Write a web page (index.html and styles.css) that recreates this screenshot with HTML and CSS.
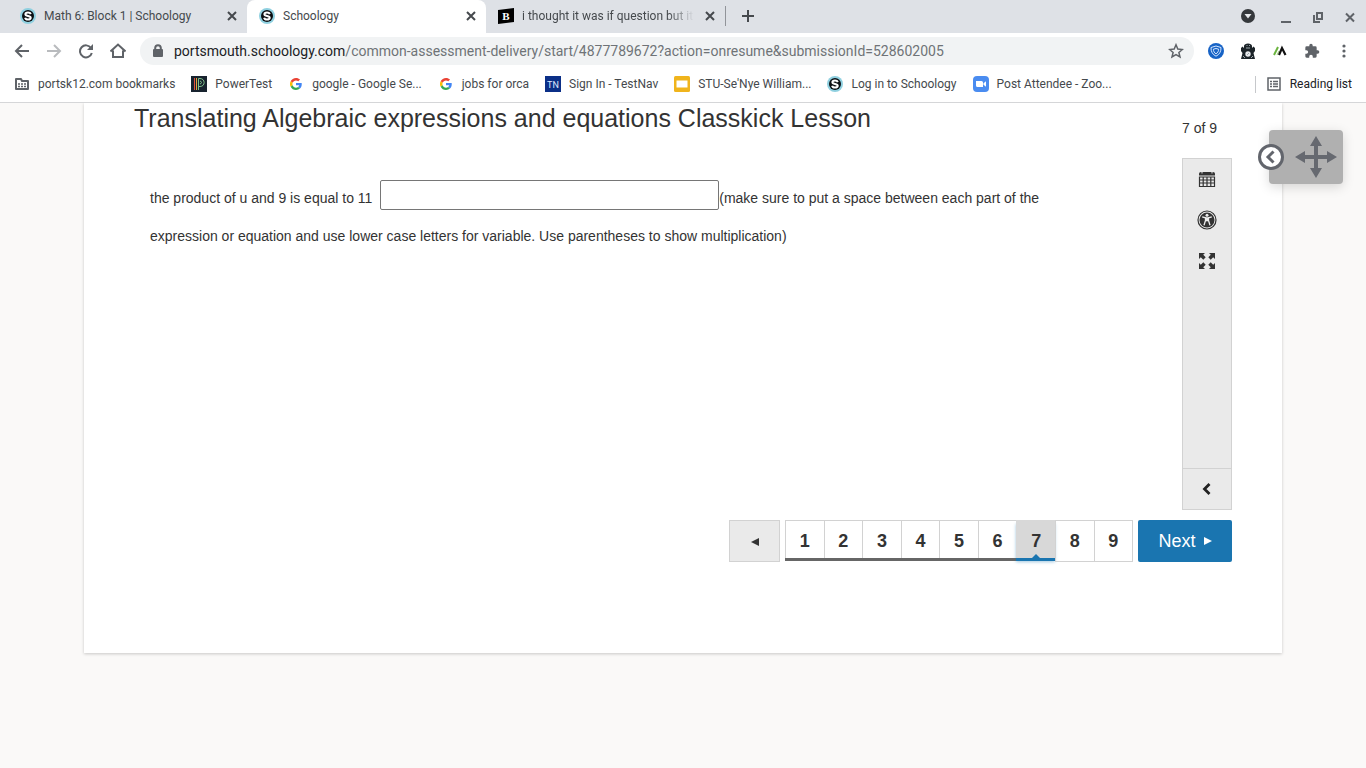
FILE: index.html
```html
<!DOCTYPE html>
<html lang="en">
<head>
    <meta charset="utf-8">
    <meta name="viewport" content="width=device-width, initial-scale=1.0">
    <title>Schoology</title>
    <link rel="stylesheet" href="styles.css">
</head>
<body>
    <svg class="sprite" aria-hidden="true">
        <symbol id="schoology" viewBox="0 0 16 16">
            <circle cx="8" cy="8" r="8" fill="#8fd0e0"/>
            <circle cx="8" cy="8" r="6" fill="#0b0f12"/>
            <path d="M10.8 6.1C10.4 4.9 9.300 4.500 8 4.500c-1.600 0-2.600.700-2.600 1.700 0 2.300 5.300 1.200 5.300 3.500 0 1.100-1.100 1.800-2.700 1.800-1.500 0-2.600-.600-2.900-1.800" fill="none" stroke="#fff" stroke-width="2"/>
        </symbol>
        <symbol id="google" viewBox="0 0 48 48">
            <path fill="#ea4335" d="M24 9.500c3.540 0 6.710 1.220 9.210 3.600l6.850-6.850C35.900 2.380 30.470 0 24 0 14.620 0 6.510 5.380 2.560 13.220l7.980 6.190C12.430 13.720 17.740 9.500 24 9.500z"/>
            <path fill="#4285f4" d="M46.980 24.550c0-1.570-.150-3.090-.380-4.550H24v9.020h12.940c-.580 2.960-2.260 5.480-4.780 7.180l7.730 6c4.510-4.180 7.090-10.360 7.090-17.650z"/>
            <path fill="#fbbc05" d="M10.530 28.590a14.500 14.500 0 0 1 0-9.180l-7.980-6.190a24 24 0 0 0 0 21.560z"/>
            <path fill="#34a853" d="M24 48c6.480 0 11.930-2.130 15.890-5.810l-7.730-6C30.010 37.640 27.240 38.500 24 38.500c-6.260 0-11.570-4.220-13.470-9.910l-7.980 6.190C6.510 42.620 14.620 48 24 48z"/>
        </symbol>
        <symbol id="cross" viewBox="0 0 16 16">
            <path d="M4 4l8 8M12 4l-8 8" fill="none" stroke="currentColor" stroke-width="2"/>
        </symbol>
    </svg>

    <header class="browser">
        <div class="tabs">
            <div class="tab">
                <svg class="icon"><use href="#schoology"/></svg>
                <span class="tab-title">Math 6: Block 1 | Schoology</span>
                <button class="tab-close" aria-label="Close tab"><svg class="icon"><use href="#cross"/></svg></button>
            </div>
            <div class="tab active">
                <svg class="icon"><use href="#schoology"/></svg>
                <span class="tab-title">Schoology</span>
                <button class="tab-close" aria-label="Close tab"><svg class="icon"><use href="#cross"/></svg></button>
            </div>
            <div class="tab">
                <svg class="icon" viewBox="0 0 16 16"><path d="M0 2l16-2v14L0 16z" fill="#000"/><text x="8" y="12" class="brainly">B</text></svg>
                <span class="tab-title faded">i thought it was if question but it</span>
                <button class="tab-close" aria-label="Close tab"><svg class="icon"><use href="#cross"/></svg></button>
            </div>
            <button class="new-tab" aria-label="New tab">
                <svg class="icon" viewBox="0 0 16 16"><path d="M8 2v12M2 8h12" stroke="currentColor" stroke-width="2"/></svg>
            </button>
            <div class="window-buttons">
                <button class="tab-search" aria-label="Search tabs"><svg class="icon" viewBox="0 0 16 16"><circle cx="8" cy="8" r="7" fill="#35383c"/><path d="M4.500 6h7L8 10.500z" fill="#e8eaed"/></svg></button>
                <button aria-label="Minimize"><svg class="icon" viewBox="0 0 16 16"><path d="M3 13h10" stroke="currentColor" stroke-width="2"/></svg></button>
                <button aria-label="Restore"><svg class="icon" viewBox="0 0 16 16"><path d="M7 4h5v6H7zM4 6v7h6" fill="none" stroke="currentColor" stroke-width="2"/></svg></button>
                <button aria-label="Close"><svg class="icon" viewBox="0 0 16 16"><path d="M4 4.500l8 8M12 4.500l-8 8" stroke="currentColor" stroke-width="2"/></svg></button>
            </div>
        </div>

        <div class="toolbar">
            <button aria-label="Back"><svg class="icon" viewBox="0 0 16 16"><path d="M15 8H2M8 2L2 8l6 6" fill="none" stroke="currentColor" stroke-width="2"/></svg></button>
            <button aria-label="Forward" disabled><svg class="icon" viewBox="0 0 16 16"><path d="M1 8h13M8 2l6 6-6 6" fill="none" stroke="currentColor" stroke-width="2"/></svg></button>
            <button aria-label="Reload"><svg class="icon" viewBox="0 0 16 16"><path d="M13 5A6 6 0 1 0 13.800 10" fill="none" stroke="currentColor" stroke-width="2"/><path d="M15 1v6H9z" fill="currentColor"/></svg></button>
            <button aria-label="Home"><svg class="icon" viewBox="0 0 16 16"><path d="M.500 8.500L8 1.500l7.500 7M3 7.500V14h10V7.500" fill="none" stroke="currentColor" stroke-width="2"/></svg></button>
            <div class="address">
                <svg class="lock" viewBox="0 0 12 14"><path d="M3.200 6V4a2.800 2.800 0 0 1 5.600 0v2" fill="none" stroke="#5f6368" stroke-width="2"/><rect x="1" y="5" width="10" height="8" rx="1" fill="#5f6368"/></svg>
                <span class="url"><b>portsmouth.schoology.com</b>/common-assessment-delivery/start/4877789672?action=onresume&amp;submissionId=528602005</span>
                <svg class="icon" viewBox="0 0 16 16"><path d="M8 1.800l1.800 4.300 4.600.400-3.500 3 1.100 4.500-4-2.400L4 14l1.100-4.500-3.500-3 4.600-.400z" fill="none" stroke="#5f6368" stroke-width="1.500"/></svg>
            </div>
            <button aria-label="Security extension"><svg class="icon" viewBox="0 0 16 16"><circle cx="8" cy="8" r="8" fill="#1763c6"/><path d="M8 3l5 1.500c.200 4-1.500 7-5 8.700C4.500 11.500 2.800 8.500 3 4.500z" fill="none" stroke="#d7e8ff"/><path d="M8 5.500l2.600.700c0 2-.900 3.600-2.600 4.600-1.700-1-2.600-2.600-2.600-4.600z" fill="none" stroke="#d7e8ff"/></svg></button>
            <button aria-label="Bear extension"><svg class="icon" viewBox="0 0 16 16"><path d="M4 3C4-.500 12-.500 12 3v2l1.500-1.500L15 5v3l-1.500 2 1.500 6H1l1.500-6L1 8V5l1.500-1.500L4 5z" fill="#1c2429"/><circle cx="8" cy="11" r="2.700" fill="#e8eaed"/><path d="M6.500 2.500h1M9 2.500h1M6 5h4M3 13l2 2M13 13l-2 2M7 12l2-2" stroke="#9aa5ab"/></svg></button>
            <button aria-label="Reader extension"><svg class="icon" viewBox="0 0 16 16"><path d="M2 12l4-8" stroke="#6ab43e" stroke-width="2"/><path d="M5 12l2-4" stroke="#9acb72"/><path d="M7 12l3-7 3.500 7" fill="none" stroke="#111" stroke-width="2.200"/></svg></button>
            <button aria-label="Extensions"><svg class="icon" viewBox="0 0 24 24"><path d="M20.500 11H19V7a2 2 0 0 0-2-2h-4V3.500a2.500 2.500 0 0 0-5 0V5H4a2 2 0 0 0-2 2v3.800h1.500a2.700 2.700 0 0 1 0 5.400H2V20a2 2 0 0 0 2 2h3.800v-1.500a2.700 2.700 0 0 1 5.400 0V22H17a2 2 0 0 0 2-2v-4h1.500a2.500 2.500 0 0 0 0-5z" fill="currentColor"/></svg></button>
            <button aria-label="Menu"><svg class="icon" viewBox="0 0 16 16"><g fill="currentColor"><circle cx="8" cy="3" r="1.600"/><circle cx="8" cy="8" r="1.600"/><circle cx="8" cy="13" r="1.600"/></g></svg></button>
        </div>

        <nav class="bookmarks">
            <a href="#"><svg class="icon" viewBox="0 0 16 16"><path d="M2 3h5l1 2h6v8H2z" fill="none" stroke="#5f6368" stroke-width="2" stroke-linejoin="round"/><path d="M4 8h2M7 8h2M10 8h2M4 10.500h2M7 10.500h2M10 10.500h2" stroke="#5f6368" stroke-width="1.500"/></svg>portsk12.com bookmarks</a>
            <a href="#"><svg class="icon" viewBox="0 0 16 16"><path d="M0 0h16v16H0z" fill="#18232f"/><path d="M3.500 2v12" stroke="#e2513c"/><path d="M5.500 2v12" stroke="#e9a13b"/><path d="M7.500 14V2.500H9c5.500 0 5.500 8 0 8H7.500M9 5c2 .500 2 2.500 0 3" fill="none" stroke="#7fc08a"/></svg>PowerTest</a>
            <a href="#"><svg class="icon g"><use href="#google"/></svg>google - Google Se...</a>
            <a href="#"><svg class="icon g"><use href="#google"/></svg>jobs for orca</a>
            <a href="#"><svg class="icon" viewBox="0 0 16 16"><path d="M0 0h16v16H0z" fill="#0b2f87"/><text x="8" y="12" class="testnav">TN</text></svg>Sign In - TestNav</a>
            <a href="#"><svg class="icon" viewBox="0 0 16 16"><rect y="0" width="16" height="16" rx="1.500" fill="#f0b41c"/><path d="M2.500 4.500h11v7h-11z" fill="#fff"/></svg>STU-Se'Nye William...</a>
            <a href="#"><svg class="icon"><use href="#schoology"/></svg>Log in to Schoology</a>
            <a href="#"><svg class="icon" viewBox="0 0 16 16"><rect width="16" height="16" rx="4" fill="#4a8cf0"/><path d="M3 5h5.500a1.500 1.500 0 0 1 1.500 1.500V11H4.500A1.500 1.500 0 0 1 3 9.500zM10.500 7.200L13 5.300v5.400l-2.500-1.900z" fill="#fff"/></svg>Post Attendee - Zoo...</a>
            <button class="reading-list"><svg class="icon" viewBox="0 0 16 16"><path d="M2 2h12v12H2z" fill="none" stroke="#5f6368" stroke-width="1.500"/><path d="M4 5.500h2M7 5.500h5M4 8h2M7 8h5M4 10.500h2M7 10.500h5" stroke="#5f6368" stroke-width="1.400"/></svg>Reading list</button>
        </nav>
    </header>

    <main class="page">
        <section class="assessment">
            <div class="heading">
                <h1>Translating Algebraic expressions and equations Classkick Lesson</h1>
                <span class="progress">7 of 9</span>
            </div>
            <div class="workspace">
                <p class="question"><label for="answer">the product of u and 9 is equal to 11</label> <input type="text" id="answer" class="answer">(make sure to put a space between each part of the expression or equation and use lower case letters for variable. Use parentheses to show multiplication)</p>
                <aside class="tools">
                    <button aria-label="Calendar"><svg viewBox="0 0 20 20"><path d="M2 6.500V4.500Q2 3 4 3h12q2 0 2 1.500v2z" fill="#333"/><path d="M5 1.500v3M15 1.500v3M8 2.500h4" stroke="#eaeaea" stroke-width="1"/><path d="M2.500 8h15v9.500h-15zM2.500 11h15M2.500 14h15M6.200 8v9.500M10 8v9.500M13.800 8v9.500" fill="none" stroke="#333" stroke-width="1.200"/></svg></button>
                    <button aria-label="Accessibility"><svg viewBox="0 0 20 20"><circle cx="10" cy="10" r="9" fill="none" stroke="#333" stroke-width="1.200"/><circle cx="10" cy="10" r="7.500" fill="#333"/><circle cx="10" cy="5.300" r="1.500" fill="#eee"/><path d="M5.200 6.800l3.300 1v2.700L7 15.200M14.800 6.800l-3.300 1v2.700l1.500 4.700" fill="none" stroke="#eee" stroke-width="1.300"/><path d="M8.300 7.300h3.400v4H8.300z" fill="#eee"/></svg></button>
                    <button aria-label="Full screen"><svg viewBox="0 0 20 20"><path d="M2 2h6L6.200 3.800l2.500 2.500-2.400 2.400-2.500-2.500L2 8zM18 2v6l-1.800-1.800-2.500 2.500-2.400-2.400 2.500-2.500L12 2zM2 18v-6l1.800 1.800 2.500-2.500 2.400 2.400-2.500 2.500L8 18zM18 18h-6l1.800-1.800-2.500-2.500 2.400-2.400 2.500 2.500L18 12z" fill="#333"/></svg></button>
                    <button class="collapse" aria-label="Collapse tools"><svg viewBox="0 0 20 20"><path d="M12.500 5L7.500 10l5 5" fill="none" stroke="#222" stroke-width="2.800"/></svg></button>
                </aside>
            </div>
            <nav class="pager">
                <button class="prev" aria-label="Previous"><svg class="arrow" viewBox="0 0 8 8"><path d="M8 0v8L0 4z" fill="#333"/></svg></button>
                <div class="numbers">
                    <button class="seen">1</button>
                    <button class="seen">2</button>
                    <button class="seen">3</button>
                    <button class="seen">4</button>
                    <button class="seen">5</button>
                    <button class="seen">6</button>
                    <button class="current">7</button>
                    <button>8</button>
                    <button>9</button>
                </div>
                <button class="next">Next <svg class="arrow" viewBox="0 0 8 8"><path d="M0 0v8l8-4z" fill="#fff"/></svg></button>
            </nav>
        </section>

        <div class="floating">
            <button class="floating-open" aria-label="Open panel"><svg viewBox="0 0 26 26"><circle cx="13" cy="13" r="11.500" fill="#fff" stroke="#62656c" stroke-width="3"/><path d="M15.500 7.500L10 13l5.500 5.500" fill="none" stroke="#62656c" stroke-width="3"/></svg></button>
            <svg class="move" viewBox="0 0 42 42"><path d="M21 0l6 10h-4v9h9v-4l10 6-10 6v-4h-9v9h4l-6 10-6-10h4v-9h-9v4L0 21l10-6v4h9v-9h-4z" fill="#666970"/></svg>
        </div>
    </main>
</body>
</html>
```
FILE: styles.css
```css
* {
    box-sizing: border-box;
}
body {
    margin: 0;
    min-height: 100vh;
    background-color: #faf9f8;
    color: #333;
    font-family: "Liberation Sans", Arial, sans-serif;
}
button {
    border: none;
    background: none;
    padding: 0;
    color: inherit;
    font-family: inherit;
    cursor: pointer;
}
.sprite {
    display: none;
}
.icon {
    width: 16px;
    height: 16px;
    flex: none;
}

/* browser bar */
.browser {
    background-color: white;
    border-bottom: 1px solid #d5d6d8;
    font-family: Roboto, sans-serif;
    color: #45494d;
}
.tabs {
    display: flex;
    height: 33px;
    padding-left: 8px;
    background-color: #dee1e6;
}
.tab {
    display: flex;
    align-items: center;
    gap: 8px;
    width: 239px;
    padding: 0 7px 2px 12px;
    font-size: 12px;
}
.tab.active {
    background-color: white;
    border-radius: 8px 8px 0 0;
}
.tab-title {
    flex: 1;
    overflow: hidden;
    white-space: nowrap;
}
.faded {
    -webkit-mask-image: linear-gradient(to right, black 85%, transparent);
    mask-image: linear-gradient(to right, black 85%, transparent);
}
.tab-close {
    display: flex;
}
.brainly {
    font-family: "Liberation Serif", serif;
    font-size: 11px;
    font-weight: bold;
    fill: white;
    text-anchor: middle;
}
.testnav {
    font-size: 9px;
    fill: #dfe7ff;
    text-anchor: middle;
}
.new-tab {
    display: flex;
    align-items: center;
    height: 20px;
    margin-top: 6px;
    padding: 0 14px;
    border-left: 1px solid #919499;
}
.window-buttons {
    display: flex;
    margin-left: auto;
}
.window-buttons button {
    display: flex;
    align-items: center;
    justify-content: center;
    width: 32px;
    color: #5f6368;
}
.window-buttons .tab-search {
    margin-right: 6px;
    padding-bottom: 2px;
}
.toolbar {
    display: flex;
    align-items: center;
    height: 36px;
    padding: 0 6px;
}
.toolbar button {
    display: flex;
    justify-content: center;
    width: 32px;
    color: #5f6368;
}
.toolbar button:disabled {
    color: #b9bbbe;
}
.address {
    display: flex;
    align-items: center;
    gap: 10px;
    flex: 1;
    min-width: 0;
    height: 28px;
    margin: 0 6px;
    padding: 0 10px 0 12px;
    border-radius: 14px;
    background-color: #f1f3f4;
}
.lock {
    width: 12px;
    height: 14px;
}
.url {
    flex: 1;
    overflow: hidden;
    white-space: nowrap;
    font-size: 14px;
    color: #6f7377;
}
.url b {
    font-weight: normal;
    color: #202124;
}
.bookmarks {
    display: flex;
    align-items: center;
    gap: 16px;
    height: 33px;
    padding: 0 14px 3px;
    font-size: 12px;
    white-space: nowrap;
}
.bookmarks a {
    display: flex;
    align-items: center;
    gap: 8px;
    color: inherit;
    text-decoration: none;
}
.icon.g {
    padding: 2px;
}
.reading-list {
    display: flex;
    align-items: center;
    gap: 8px;
    height: 17px;
    margin-left: auto;
    padding-left: 10px;
    border-left: 1px solid #c6c8cb;
    font-size: 12px;
    color: #202124;
}

/* assessment */
.page {
    position: relative;
}
.assessment {
    margin: 0 84px;
    padding: 0 50px 91px;
    background-color: white;
    box-shadow: 0 1px 3px rgba(0, 0, 0, 0.2);
    clip-path: inset(0 -4px -4px -4px);
}
.heading {
    display: flex;
    justify-content: space-between;
    height: 55px;
}
h1 {
    margin: 0;
    font-size: 25px;
    font-weight: normal;
    line-height: 31px;
}
.progress {
    padding: 17px 15px 0 0;
    font-size: 14px;
    line-height: 16px;
}
.workspace {
    display: flex;
    justify-content: space-between;
}
.question {
    flex: 1;
    margin: 22px 80px 0 16px;
    font-size: 14px;
    line-height: 37px;
}
.answer {
    width: 339px;
    height: 30px;
    margin: 0 0 8px 4px;
    border: 1px solid #767676;
    border-radius: 2px;
    vertical-align: middle;
}
.tools {
    display: flex;
    flex-direction: column;
    width: 50px;
    min-height: 352px;
    border: 1px solid #d2d2d2;
    background-color: #eaeaea;
}
.tools button {
    display: flex;
    align-items: center;
    justify-content: center;
    height: 41px;
    padding-bottom: 2px;
}
.tools svg {
    width: 20px;
    height: 20px;
}
.tools .collapse {
    margin-top: auto;
    padding-bottom: 0;
    border-top: 1px solid #d2d2d2;
}
.pager {
    display: flex;
    justify-content: flex-end;
    gap: 5px;
    height: 42px;
    margin-top: 10px;
}
.arrow {
    width: 8px;
    height: 8px;
}
.prev {
    width: 51px;
    border: 1px solid #d2d2d2;
    background-color: #eaeaea;
}
.numbers {
    display: flex;
    width: 348px;
    border-right: 1px solid #d2d2d2;
}
.numbers button {
    position: relative;
    flex: 1;
    border: 1px solid #d2d2d2;
    border-right: none;
    font-size: 18px;
    font-weight: bold;
}
.numbers .seen, .numbers .current {
    margin-bottom: 4px;
    padding-top: 4px;
    border-bottom: none;
    box-shadow: 0 3px 0 #666;
}
.numbers .current {
    background-color: #d8d8d8;
    border-color: #d8d8d8;
    box-shadow: 0 3px 0 #1a75b0, 0 4px 3px rgba(26, 117, 176, 0.4);
}
/* pointer on top of the blue line */
.current::after {
    content: "";
    position: absolute;
    bottom: 0;
    left: 50%;
    margin-left: -4px;
    border: 4px solid transparent;
    border-top: none;
    border-bottom-color: #1a75b0;
}
.next {
    display: flex;
    align-items: center;
    justify-content: center;
    gap: 8px;
    width: 94px;
    border-radius: 2px;
    background-color: #1a75b0;
    color: white;
    font-size: 18px;
}

/* draggable extension handle */
.floating {
    position: absolute;
    top: 27px;
    right: 23px;
    display: flex;
    align-items: center;
    justify-content: flex-end;
    width: 74px;
    height: 54px;
    padding-right: 6px;
    border-radius: 4px;
    background-color: #b0b0b0;
    box-shadow: 0 3px 12px rgba(0, 0, 0, 0.15);
}
.floating-open {
    position: absolute;
    left: -11px;
    width: 26px;
    height: 26px;
}
.move {
    width: 42px;
    height: 42px;
}
```
